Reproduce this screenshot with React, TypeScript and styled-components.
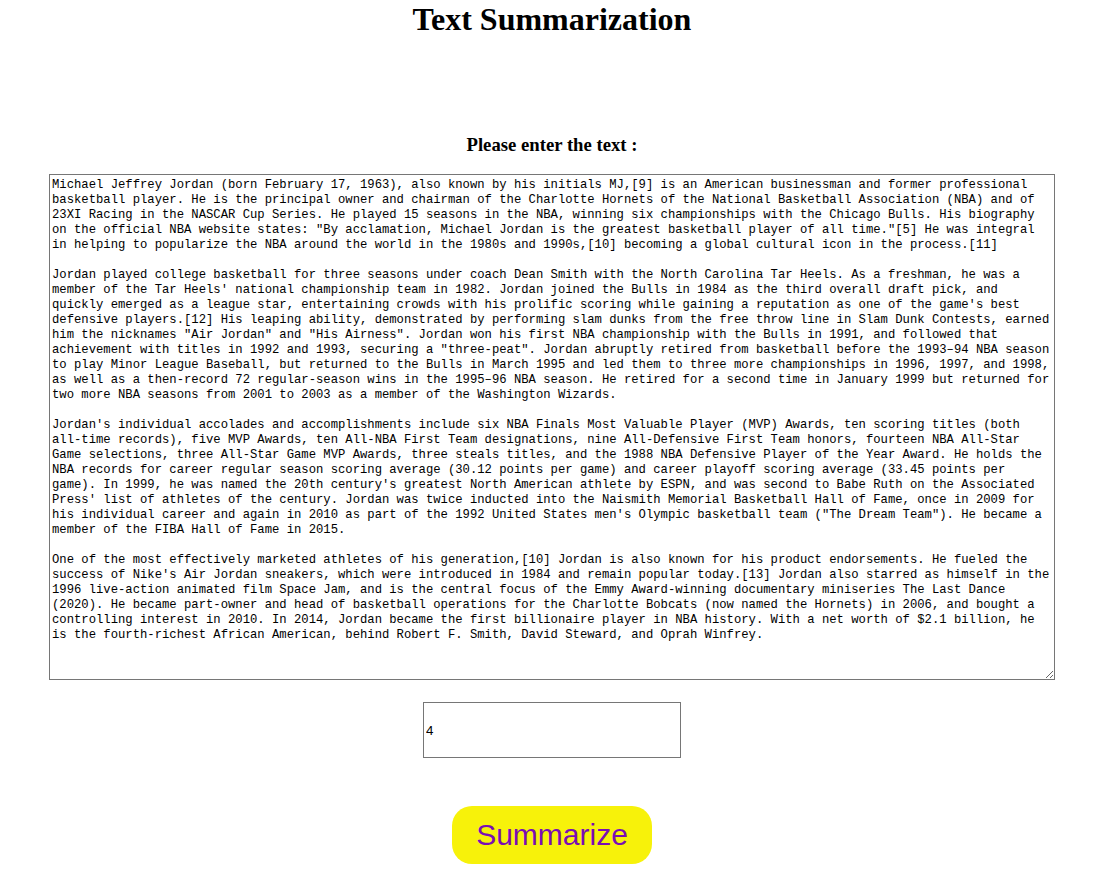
import React, { useState } from 'react';
import styled, { createGlobalStyle } from 'styled-components';

const GlobalStyle = createGlobalStyle`
  html, body {
    margin: 0;
    padding: 0;
    background: #ffffff;
    font-family: "Liberation Serif", "Times New Roman", serif;
    color: #000000;
  }
`;

const Page = styled.div`
  display: flex;
  flex-direction: column;
  align-items: center;
  text-align: center;
  padding-left: 2px;
`;

const Title = styled.h1`
  font-family: "Liberation Serif", "Times New Roman", serif;
  font-size: 32px;
  font-weight: bold;
  line-height: 37px;
  margin: 1px 0 0;
`;

const Form = styled.form`
  display: flex;
  flex-direction: column;
  align-items: center;
  width: 100%;
`;

const Prompt = styled.h3`
  font-family: "Liberation Serif", "Times New Roman", serif;
  font-size: 18.72px;
  font-weight: bold;
  line-height: 21.5px;
  margin: 96px 0 18.5px;
`;

const TextBox = styled.textarea`
  box-sizing: border-box;
  display: block;
  width: 1006px;
  height: 506px;
  margin: 0;
  padding: 3px 2px 2px 2px;
  border: 1px solid #767676;
  border-radius: 0;
  font-family: "Liberation Mono", "Courier New", monospace;
  font-size: 12.22px;
  line-height: 15px;
  color: #000000;
  background: #ffffff;
  white-space: pre;
  overflow: hidden;
  resize: both;
  outline: none;
`;

const CountInput = styled.input`
  box-sizing: border-box;
  display: block;
  width: 258px;
  height: 56px;
  margin: 22px 0 0;
  padding: 1px 2px;
  border: 1px solid #767676;
  border-radius: 0;
  font-family: "Liberation Sans", Arial, sans-serif;
  font-size: 13.33px;
  color: #000000;
  outline: none;
`;

const SubmitButton = styled.button`
  box-sizing: border-box;
  width: 200px;
  height: 58px;
  margin-top: 48px;
  border: none;
  border-radius: 20px;
  background: #f7f20a;
  color: #7a0db4;
  font-family: "Liberation Sans", Arial, sans-serif;
  font-size: 30px;
  cursor: pointer;
`;

const ARTICLE = [
  'Michael Jeffrey Jordan (born February 17, 1963), also known by his initials MJ,[9] is an American businessman and former professional',
  'basketball player. He is the principal owner and chairman of the Charlotte Hornets of the National Basketball Association (NBA) and of',
  '23XI Racing in the NASCAR Cup Series. He played 15 seasons in the NBA, winning six championships with the Chicago Bulls. His biography',
  'on the official NBA website states: "By acclamation, Michael Jordan is the greatest basketball player of all time."[5] He was integral',
  'in helping to popularize the NBA around the world in the 1980s and 1990s,[10] becoming a global cultural icon in the process.[11]',
  '',
  'Jordan played college basketball for three seasons under coach Dean Smith with the North Carolina Tar Heels. As a freshman, he was a',
  "member of the Tar Heels' national championship team in 1982. Jordan joined the Bulls in 1984 as the third overall draft pick, and",
  "quickly emerged as a league star, entertaining crowds with his prolific scoring while gaining a reputation as one of the game's best",
  'defensive players.[12] His leaping ability, demonstrated by performing slam dunks from the free throw line in Slam Dunk Contests, earned',
  'him the nicknames "Air Jordan" and "His Airness". Jordan won his first NBA championship with the Bulls in 1991, and followed that',
  'achievement with titles in 1992 and 1993, securing a "three-peat". Jordan abruptly retired from basketball before the 1993–94 NBA season',
  'to play Minor League Baseball, but returned to the Bulls in March 1995 and led them to three more championships in 1996, 1997, and 1998,',
  'as well as a then-record 72 regular-season wins in the 1995–96 NBA season. He retired for a second time in January 1999 but returned for',
  'two more NBA seasons from 2001 to 2003 as a member of the Washington Wizards.',
  '',
  "Jordan's individual accolades and accomplishments include six NBA Finals Most Valuable Player (MVP) Awards, ten scoring titles (both",
  'all-time records), five MVP Awards, ten All-NBA First Team designations, nine All-Defensive First Team honors, fourteen NBA All-Star',
  'Game selections, three All-Star Game MVP Awards, three steals titles, and the 1988 NBA Defensive Player of the Year Award. He holds the',
  'NBA records for career regular season scoring average (30.12 points per game) and career playoff scoring average (33.45 points per',
  "game). In 1999, he was named the 20th century's greatest North American athlete by ESPN, and was second to Babe Ruth on the Associated",
  "Press' list of athletes of the century. Jordan was twice inducted into the Naismith Memorial Basketball Hall of Fame, once in 2009 for",
  'his individual career and again in 2010 as part of the 1992 United States men\'s Olympic basketball team ("The Dream Team"). He became a',
  'member of the FIBA Hall of Fame in 2015.',
  '',
  'One of the most effectively marketed athletes of his generation,[10] Jordan is also known for his product endorsements. He fueled the',
  "success of Nike's Air Jordan sneakers, which were introduced in 1984 and remain popular today.[13] Jordan also starred as himself in the",
  '1996 live-action animated film Space Jam, and is the central focus of the Emmy Award-winning documentary miniseries The Last Dance',
  '(2020). He became part-owner and head of basketball operations for the Charlotte Bobcats (now named the Hornets) in 2006, and bought a',
  'controlling interest in 2010. In 2014, Jordan became the first billionaire player in NBA history. With a net worth of $2.1 billion, he',
  'is the fourth-richest African American, behind Robert F. Smith, David Steward, and Oprah Winfrey.',
].join('\n');

const App: React.FC = () => {
  const [text, setText] = useState<string>(ARTICLE);
  const [count, setCount] = useState<string>('4');

  return (
    <>
      <GlobalStyle />
      <Page>
        <Title>Text Summarization</Title>
        <Form onSubmit={(e) => e.preventDefault()}>
          <Prompt>Please enter the text :</Prompt>
          <TextBox
            value={text}
            wrap="off"
            spellCheck={false}
            onChange={(e) => setText(e.target.value)}
          />
          <CountInput
            type="text"
            value={count}
            onChange={(e) => setCount(e.target.value)}
          />
          <SubmitButton type="submit">Summarize</SubmitButton>
        </Form>
      </Page>
    </>
  );
};

export default App;
